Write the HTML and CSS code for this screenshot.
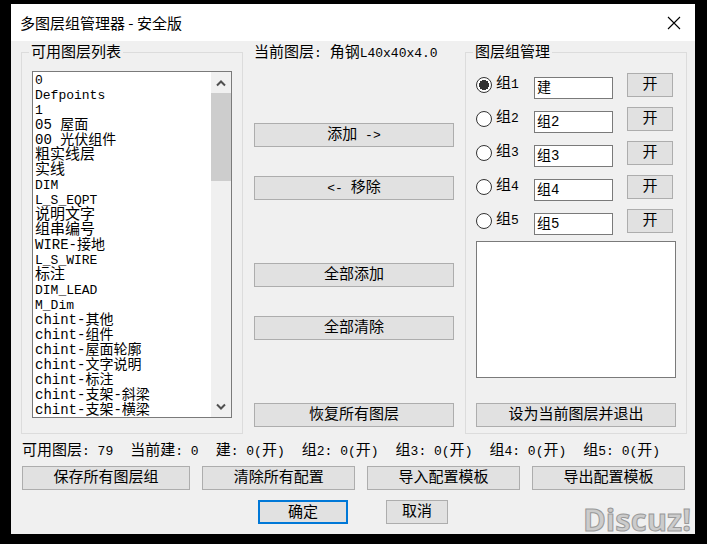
FILE: index.html
```
<!DOCTYPE html>
<html lang="zh-CN">
<head>
    <meta charset="UTF-8">
    <meta name="viewport" content="width=device-width, initial-scale=1.0">
    <title>多图层组管理器 - 安全版</title>
    <link rel="stylesheet" href="styles.css">
</head>
<body>
    <main class="dialog">
        <header class="titlebar">
            <h1>多图层组管理器 - 安全版</h1>
            <button class="close" type="button" aria-label="关闭">
                <svg width="14" height="14" viewBox="0 0 14 14"><path d="M1 1 L13 13 M13 1 L1 13" stroke="#000" stroke-width="1.1" fill="none"/></svg>
            </button>
        </header>

        <div class="columns">
            <!-- Lista de capas -->
            <fieldset class="panel">
                <legend>可用图层列表</legend>
                <div class="listbox">
                    <select class="layers" size="23" aria-label="可用图层列表">
                        <option class="latin">0</option>
                        <option class="latin">Defpoints</option>
                        <option class="latin">1</option>
                        <option class="mixed">05 屋面</option>
                        <option class="mixed">00 光伏组件</option>
                        <option>粗实线层</option>
                        <option>实线</option>
                        <option class="latin">DIM</option>
                        <option class="latin">L_S_EQPT</option>
                        <option>说明文字</option>
                        <option>组串编号</option>
                        <option class="mixed">WIRE-接地</option>
                        <option class="latin">L_S_WIRE</option>
                        <option>标注</option>
                        <option class="latin">DIM_LEAD</option>
                        <option class="latin">M_Dim</option>
                        <option class="mixed">chint-其他</option>
                        <option class="mixed">chint-组件</option>
                        <option class="mixed">chint-屋面轮廓</option>
                        <option class="mixed">chint-文字说明</option>
                        <option class="mixed">chint-标注</option>
                        <option class="mixed">chint-支架-斜梁</option>
                        <option class="mixed">chint-支架-横梁</option>
                    </select>
                    <div class="scrollbar">
                        <button class="arrow" type="button" aria-label="向上滚动">
                            <svg width="10" height="8" viewBox="0 0 10 8"><path d="M1 6.5 L5 2.5 L9 6.5" stroke="#505050" stroke-width="2" fill="none"/></svg>
                        </button>
                        <div class="track"><div class="thumb"></div></div>
                        <button class="arrow" type="button" aria-label="向下滚动">
                            <svg width="10" height="8" viewBox="0 0 10 8"><path d="M1 1.5 L5 5.5 L9 1.5" stroke="#505050" stroke-width="2" fill="none"/></svg>
                        </button>
                    </div>
                </div>
            </fieldset>

            <!-- Acciones -->
            <div class="actions">
                <p class="current">当前图层<span class="latin">: </span>角钢<span class="latin">L40x40x4.0</span></p>
                <div class="pair">
                    <button class="btn" type="button">添加<span class="latin"> -&gt;</span></button>
                    <button class="btn" type="button"><span class="latin">&lt;- </span>移除</button>
                </div>
                <div class="pair">
                    <button class="btn" type="button">全部添加</button>
                    <button class="btn" type="button">全部清除</button>
                </div>
                <button class="btn" type="button">恢复所有图层</button>
            </div>

            <!-- Grupos -->
            <fieldset class="panel">
                <legend>图层组管理</legend>
                <div class="groups">
                    <div class="group">
                        <label><input type="radio" name="group" checked>组<span class="latin">1</span></label>
                        <input class="name" type="text" value="建" aria-label="组1名称">
                        <button class="btn" type="button">开</button>
                    </div>
                    <div class="group">
                        <label><input type="radio" name="group">组<span class="latin">2</span></label>
                        <input class="name" type="text" value="组2" aria-label="组2名称">
                        <button class="btn" type="button">开</button>
                    </div>
                    <div class="group">
                        <label><input type="radio" name="group">组<span class="latin">3</span></label>
                        <input class="name" type="text" value="组3" aria-label="组3名称">
                        <button class="btn" type="button">开</button>
                    </div>
                    <div class="group">
                        <label><input type="radio" name="group">组<span class="latin">4</span></label>
                        <input class="name" type="text" value="组4" aria-label="组4名称">
                        <button class="btn" type="button">开</button>
                    </div>
                    <div class="group">
                        <label><input type="radio" name="group">组<span class="latin">5</span></label>
                        <input class="name" type="text" value="组5" aria-label="组5名称">
                        <button class="btn" type="button">开</button>
                    </div>
                </div>
                <select class="members" size="9" aria-label="组内图层"></select>
                <button class="btn apply" type="button">设为当前图层并退出</button>
            </fieldset>
        </div>

        <div class="status">
            <span>可用图层<span class="latin">: 79</span></span>
            <span>当前建<span class="latin">: 0</span></span>
            <span>建<span class="latin">: 0(</span>开<span class="latin">)</span></span>
            <span>组<span class="latin">2: 0(</span>开<span class="latin">)</span></span>
            <span>组<span class="latin">3: 0(</span>开<span class="latin">)</span></span>
            <span>组<span class="latin">4: 0(</span>开<span class="latin">)</span></span>
            <span>组<span class="latin">5: 0(</span>开<span class="latin">)</span></span>
        </div>

        <div class="config">
            <button class="btn" type="button">保存所有图层组</button>
            <button class="btn" type="button">清除所有配置</button>
            <button class="btn" type="button">导入配置模板</button>
            <button class="btn" type="button">导出配置模板</button>
        </div>

        <div class="confirm">
            <button class="btn ok" type="button">确定</button>
            <button class="btn cancel" type="button">取消</button>
        </div>

        <div class="watermark">Discuz!</div>
    </main>
</body>
</html>
```
FILE: styles.css
```
* {
    box-sizing: border-box;
}
body {
    margin: 0;
    padding: 4px 12px 10px 11px;
    background-color: #000000;
    color: #000000;
    font-family: "Liberation Mono", "Noto Sans CJK SC", monospace;
    font-size: 15px;
    line-height: 18px;
}
button, input, select {
    font: inherit;
    color: inherit;
    margin: 0;
}
.latin {
    font-size: 13px;
    white-space: pre;
}
.mixed {
    font-size: 14px;
}
.dialog {
    position: relative;
    background-color: #f0f0f0;
    padding-bottom: 10px;
}

/* Barra de título */
.titlebar {
    display: flex;
    align-items: center;
    justify-content: space-between;
    height: 37px;
    padding: 0 14px 0 9px;
    background-color: #ffffff;
}
.titlebar h1 {
    margin: 0;
    font-family: "Noto Sans CJK SC", sans-serif;
    font-size: 15px;
    font-weight: normal;
}
.close {
    display: flex;
    padding: 0;
    border: none;
    background: none;
}

.columns {
    display: grid;
    grid-template-columns: repeat(3, minmax(0, 1fr));
    padding: 0 8px 0 10px;
}
.panel {
    display: flex;
    flex-direction: column;
    min-width: 0;
    margin: 0;
    padding: 8px 10px 15px;
    border: 1px solid #dcdcdc;
}
.panel legend {
    margin-left: -3px;
    padding: 4px 2px 0;
    line-height: 18px;
}
.btn {
    height: 24px;
    padding: 2px 0 0;
    border: 1px solid #adadad;
    background-color: #e1e1e1;
    line-height: 20px;
}

/* Lista con barra de desplazamiento */
.listbox {
    display: flex;
    border: 1px solid #7a7a7a;
    background-color: #ffffff;
}
.layers {
    flex: 1;
    min-width: 0;
    height: 345px;
    padding: 0;
    border: none;
    border-radius: 0;
    background-color: #ffffff;
    overflow: hidden;
    outline: none;
}
.layers option {
    display: flex;
    align-items: center;
    height: 15px;
    min-height: 15px;
    padding: 0 2px 4px;
    line-height: 15px;
}
.layers .latin {
    padding: 1px 2px 0;
}
.scrollbar {
    display: flex;
    flex-direction: column;
    width: 20px;
    background-color: #f0f0f0;
}
.arrow {
    display: flex;
    align-items: center;
    justify-content: center;
    height: 21px;
    padding: 0;
    border: none;
    background: none;
}
.track {
    flex: 1;
}
.thumb {
    height: 29%;
    background-color: #cdcdcd;
}

.actions {
    display: flex;
    flex-direction: column;
    padding: 4px 11px 0;
}
.current {
    height: 78px;
    margin: 0;
    white-space: nowrap;
}
.pair {
    display: grid;
    gap: 29px;
    margin-bottom: 63px;
}

/* Grupos */
.groups {
    display: grid;
    gap: 8px;
    padding: 2px 3px 0 0;
}
.group {
    display: grid;
    grid-template-columns: 44px 1fr 46px;
    column-gap: 14px;
    height: 26px;
}
.group label {
    display: flex;
    align-items: center;
    height: 24px;
}
.group input[type="radio"] {
    appearance: none;
    flex: none;
    width: 16px;
    height: 16px;
    margin-right: 4px;
    border: 1px solid #333333;
    border-radius: 50%;
    background-color: #ffffff;
}
.group input[type="radio"]:checked {
    background-image: radial-gradient(circle, #333333 5px, transparent 5px);
}
.name {
    align-self: end;
    min-width: 0;
    height: 22px;
    padding: 0 2px 5px;
    border: 1px solid #7a7a7a;
    background-color: #ffffff;
    font-size: 14px;
}
.members {
    height: 137px;
    margin: 6px 0 25px;
    padding: 0;
    border: 1px solid #7a7a7a;
    border-radius: 0;
    background-color: #ffffff;
}
.apply {
    margin-bottom: -9px;
}

.status {
    display: flex;
    gap: 17px;
    padding: 9px 11px 5px;
    white-space: nowrap;
}
.config {
    display: grid;
    grid-template-columns: 11fr 10fr 10fr 10fr;
    gap: 12px;
    padding: 0 10px 0 11px;
}
.confirm {
    display: flex;
    justify-content: center;
    gap: 38px;
    padding-top: 10px;
}
.ok {
    width: 90px;
    border: 2px solid #0078d7;
}
.cancel {
    width: 62px;
}

.watermark {
    position: absolute;
    right: 4px;
    bottom: 0;
    color: #cccccc;
    font-family: "Open Sans", sans-serif;
    font-size: 31px;
    font-weight: bold;
    line-height: 30px;
    -webkit-text-stroke: 1px #999999;
    pointer-events: none;
}
```
